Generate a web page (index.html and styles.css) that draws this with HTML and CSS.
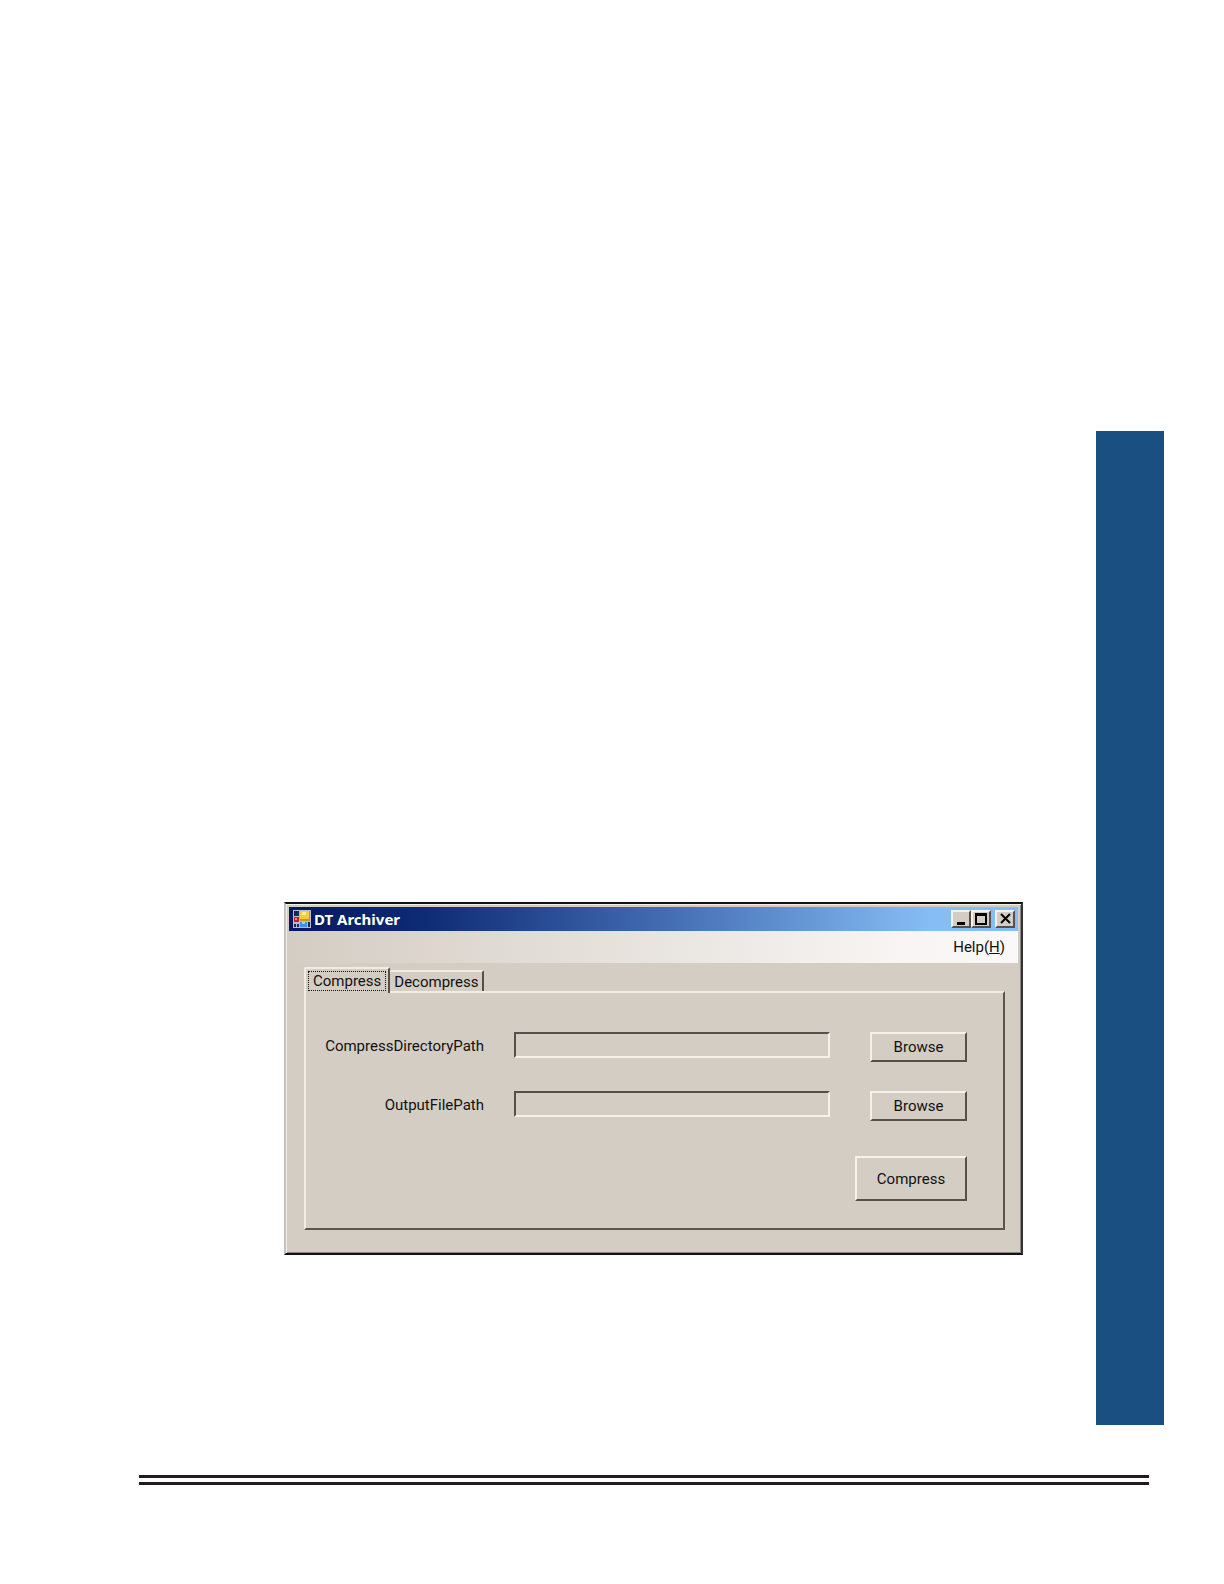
FILE: index.html
```html
<!doctype html>
<html lang="en">
    <head>
        <meta charset="utf-8">
        <title>DT Archiver</title>
        <link rel="stylesheet" href="styles.css">
    </head>
    <body>
        <div class="page">
            <div class="main">
                <div class="window">
                    <div class="titlebar">
                        <svg class="appicon" width="18" height="18" viewBox="0 0 18 18">
                            <rect x="0" y="0" width="18" height="18" fill="#b9bccb"/>
                            <rect x="1" y="1" width="5" height="5" fill="#1a2560"/>
                            <rect x="1" y="7" width="5" height="5" fill="#c4202a"/>
                            <rect x="2" y="8" width="2" height="2" fill="#f08a80"/>
                            <rect x="7" y="1" width="10" height="10" fill="#c99a1c"/>
                            <rect x="7" y="1" width="9" height="8" fill="#f5cc3e"/>
                            <rect x="9" y="2" width="4" height="3" fill="#fdeb96"/>
                            <rect x="1" y="14" width="2" height="3" fill="#1a2560"/>
                            <rect x="4" y="14" width="2" height="3" fill="#1a2560"/>
                            <rect x="7" y="12" width="7" height="5" fill="#3f8fe8"/>
                            <rect x="9" y="12" width="3" height="2" fill="#9dd0ff"/>
                            <rect x="15" y="12" width="2" height="5" fill="#1a2560"/>
                        </svg>
                        <span class="title">DT Archiver</span>
                        <button class="winbtn" type="button" aria-label="Minimize">
                            <svg width="14" height="13" viewBox="0 0 14 13"><rect x="3" y="10" width="8" height="3" fill="#000"/></svg>
                        </button>
                        <button class="winbtn" type="button" aria-label="Maximize">
                            <svg width="14" height="13" viewBox="0 0 14 13"><path d="M1 1h12v12H1z M3 4v7h8V4z" fill="#000" fill-rule="evenodd"/></svg>
                        </button>
                        <button class="winbtn close" type="button" aria-label="Close">
                            <svg width="14" height="13" viewBox="0 0 14 13"><path d="M3 2l9 9M12 2l-9 9" stroke="#000" stroke-width="2"/></svg>
                        </button>
                    </div>
                    <div class="menubar">
                        <button class="menu" type="button">Help(<u>H</u>)</button>
                    </div>
                    <div class="content">
                        <div class="tabs" role="tablist">
                            <button class="tab active" type="button" role="tab" aria-selected="true"><span>Compress</span></button>
                            <button class="tab" type="button" role="tab" aria-selected="false"><span>Decompress</span></button>
                        </div>
                        <form class="panel">
                            <label for="dirpath">CompressDirectoryPath</label>
                            <input type="text" id="dirpath" readonly>
                            <button class="btn" type="button">Browse</button>
                            <label for="outpath">OutputFilePath</label>
                            <input type="text" id="outpath" readonly>
                            <button class="btn" type="button">Browse</button>
                            <button class="btn run" type="button">Compress</button>
                        </form>
                    </div>
                </div>
                <div class="sidebar"></div>
            </div>
            <div class="rule"></div>
        </div>
    </body>
</html>
```
FILE: styles.css
```css
*
{
    box-sizing: border-box;
}
body
{
    margin: 0;
    background: #fff;
    color: #111;
    font-family: Roboto, "Liberation Sans", Arial, sans-serif;
    font-size: 15px;
}
button, input
{
    font: inherit;
    color: inherit;
    padding: 0;
    margin: 0;
    border-radius: 0;
}
.page
{
    display: flex;
    flex-direction: column;
    min-height: 100vh;
    padding: 431px 60px 99px 139px;
}
.main
{
    flex: 1;
    display: flex;
    gap: 73px;
    padding-left: 145px;
}
.sidebar
{
    width: 68px;
    background: #1a4f82;
}
.rule
{
    height: 10px;
    margin-top: 50px;
    margin-right: 15px;
    border-top: 3px solid #1f1b20;
    border-bottom: 3px solid #1f1b20;
}

/* window frame */
.window
{
    flex: 1;
    align-self: flex-start;
    margin-top: 471px;
    padding: 3px;
    background: #d4cdc4;
    border: 2px solid;
    border-color: #111 #333 #111 #c4c2be;
    box-shadow: inset 1px 1px #f2eee8, inset -1px -1px #8a8680;
}
.titlebar
{
    display: flex;
    align-items: center;
    height: 24px;
    padding: 0 3px 0 4px;
    background: linear-gradient(to right, #06185f, #0d2a74 18%, #4069b0 50%, #86bdf4 88%);
}
.title
{
    flex: 1;
    margin-left: 3px;
    color: #fff;
    font-family: "Noto Sans", Tahoma, sans-serif;
    font-size: 15px;
    font-weight: bold;
}
.winbtn
{
    display: flex;
    width: 20px;
    height: 18px;
    padding: 0 1px;
    background: #d4cdc4;
    border: 2px solid;
    border-color: #f5f2ec #55504a #55504a #f5f2ec;
}
.close
{
    margin-left: 4px;
}
.menubar
{
    display: flex;
    justify-content: flex-end;
    height: 32px;
    padding-right: 13px;
    background: linear-gradient(to right, #d4cdc4, #e9e5e0 52%, #f8f5f4 85%, #faf8f8);
}
.menu
{
    background: none;
    border: 0;
}

/* tabs */
.content
{
    padding: 4px 13px 20px 15px;
}
.tabs
{
    display: flex;
    align-items: flex-end;
}
.tab
{
    height: 21px;
    padding: 0 4px;
    background: #d4cdc4;
    border: 2px solid;
    border-color: #f1ece4 #55504a transparent transparent;
    border-bottom: 0;
    border-left-width: 0;
    border-radius: 2px 2px 0 0;
}
.active
{
    position: relative;
    height: 26px;
    margin-bottom: -2px;
    padding: 0 2px;
    border-left: 2px solid #f1ece4;
}
.tab span
{
    display: block;
    line-height: 20px;
}
.active span
{
    padding: 0 4px;
    border: 1px dotted #111;
    line-height: 18px;
}
.panel
{
    display: grid;
    grid-template-columns: 178px 1fr 97px;
    grid-template-rows: 30px 30px 51px;
    row-gap: 29px;
    padding: 39px 36px 27px 0;
    border: 2px solid;
    border-color: #f1ece4 #5a554f #5a554f #f1ece4;
}
.panel label
{
    line-height: 28px;
    text-align: right;
}
.panel input
{
    min-width: 0;
    height: 26px;
    margin: 0 40px 0 30px;
    background: #d4cdc4;
    border: 2px solid;
    border-color: #55504a #f5f2ec #f5f2ec #55504a;
}
.btn
{
    background: #d4cdc4;
    border: 2px solid;
    border-color: #f5f2ec #55504a #55504a #f5f2ec;
}
.run
{
    grid-column: 2 / 4;
    justify-self: end;
    width: 112px;
    height: 45px;
    margin-top: 6px;
}
```
